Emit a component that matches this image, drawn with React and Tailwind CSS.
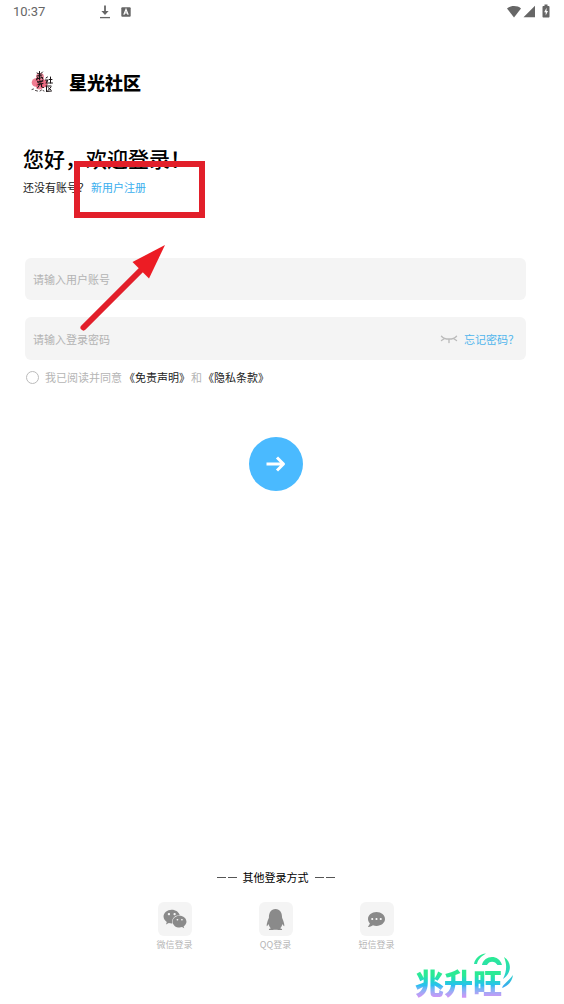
import { useState } from 'react'
import { FaQq, FaWeixin, FaCommentDots } from 'react-icons/fa'

const FONT = 'font-["Noto_Sans_CJK_SC",sans-serif]'

const LOGIN_METHODS = [
  { label: '微信登录', Icon: FaWeixin, size: 24 },
  { label: 'QQ登录', Icon: FaQq, size: 21 },
  { label: '短信登录', Icon: FaCommentDots, size: 17 },
]

/* ── Status bar ── */
function StatusBar() {
  return (
    <header className="flex h-6 items-center pl-[13px] text-[#666]">
      <span className="font-[Roboto,sans-serif] text-[13px] leading-4">10:37</span>
      <svg className="ml-[54px]" width="12" height="14" viewBox="0 0 12 14" fill="none" stroke="currentColor" aria-hidden="true">
        <path d="M6 .5V8" strokeWidth="1.8" />
        <path d="M2.4 6h7.2L6 10z" fill="currentColor" stroke="none" />
        <path d="M1 12.6h10" strokeWidth="1.3" />
      </svg>
      <svg className="ml-2.5" width="10" height="10" viewBox="0 0 10 10" aria-hidden="true">
        <rect x=".3" y=".3" width="9.4" height="9.4" rx="1" fill="currentColor" />
        <path d="M2.8 7.7 5 2.4l2.2 5.3M3.6 6h2.8" fill="none" stroke="#fff" strokeWidth="1.2" />
      </svg>
      <div className="ml-auto flex items-center pb-0.5">
        <svg width="16" height="13" viewBox="0 0 16 13" fill="currentColor" aria-hidden="true">
          <path d="M8 12.4 1 3.4C4.6.2 11.4.2 15 3.4z" />
        </svg>
        <svg className="ml-px" width="13" height="13" viewBox="0 0 13 13" fill="currentColor" aria-hidden="true">
          <path d="M12 .8V12.3H.5z" />
        </svg>
        <svg className="mr-px ml-1.5" width="8" height="14" viewBox="0 0 8 14" aria-hidden="true">
          <path d="M2.5 1.9V.5h3v1.4h1c.6 0 1 .4 1 1v9.6c0 .6-.4 1-1 1h-5c-.6 0-1-.4-1-1V2.9c0-.6.4-1 1-1z" fill="currentColor" />
          <path d="M4.5 3.8 2.2 8.3h1.5v3.2L6 7H4.5z" fill="#fff" />
        </svg>
      </div>
    </header>
  )
}

/* Brush-lettered emblem over pink blossoms */
function Logo() {
  return (
    <svg width="22" height="24" viewBox="0 0 22 24" aria-hidden="true">
      <g fill="#e9526d">
        <circle cx="5" cy="12.5" r="4.3" opacity=".75" />
        <circle cx="9" cy="7" r="4" opacity=".65" />
        <circle cx="12.5" cy="13.5" r="4" opacity=".85" />
        <circle cx="8.5" cy="16" r="3.5" opacity=".7" />
      </g>
      <g fill="none" stroke="#1a1214" strokeWidth="1" strokeLinecap="round">
        <path d="M6 3l3 1.5M11.5 2 9 4.5M6 6l5-1M8.5 1.5v8M5.5 9l6-1.5M7 7l-1.5 3M10 6.5l2 2.5" />
        <path d="M6.5 12l5.5-1M9 10v4M7 14.5l5-1M9 14l-2.500 4M10.5 14v3l2 .5M6.5 11l1 2M11.5 10l-1 2" />
        <path d="M15 8l1.5-1M14.5 10h2.500l-2 3M16 10.5V14M18 9.5h3M19.5 7v6M17.5 13h4" />
        <path d="M15 16h5M15.5 16v5M17 17.5l3 2.5M20 17l-3 3.5M15.5 21.5l5-.5" />
        <path d="M1 19.5l1.5-.5M4.5 20.5l2 .5M9 21l1.5-1M12 20.5l1 .5" strokeWidth=".8" />
      </g>
    </svg>
  )
}

function ClosedEye() {
  return (
    <svg width="18" height="10" viewBox="0 0 18 10" fill="none" stroke="#bbb" strokeWidth="1.4" strokeLinecap="round" aria-hidden="true">
      <path d="M1.5 2.2C4.5 6 13.5 6 16.5 2.2M4.5 4.5 1.5 6.5M9 5.2v3.3M13.5 4.5l3 2" />
    </svg>
  )
}

/* ── Red frame and arrow pointing at the sign-up link ── */
function Callout() {
  return (
    <div className="pointer-events-none absolute top-[161px] left-[74px]" aria-hidden="true">
      <div className="h-[57px] w-[131px] border-6 border-[#e21f2a]" />
      <svg className="mt-[26px] ml-1" width="90" height="88" viewBox="0 0 90 88">
        <path d="M5.5 83.5 62 27" stroke="#e21f2a" strokeWidth="6" strokeLinecap="round" />
        <path d="M87 1 54.5 18 71 34.5z" fill="#ec1c24" />
      </svg>
    </div>
  )
}

function Watermark() {
  return (
    <div className="pointer-events-none absolute right-[50px] bottom-0">
      <svg className="absolute top-0 right-0" width="42" height="38" viewBox="0 0 42 38" fill="none" aria-hidden="true">
        <defs>
          <linearGradient id="arc" x1="0" y1="6" x2="0" y2="36" gradientUnits="userSpaceOnUse">
            <stop offset="0" stopColor="#2bea95" />
            <stop offset=".5" stopColor="#2ad6c4" />
            <stop offset="1" stopColor="#3aa5f5" />
          </linearGradient>
        </defs>
        <path d="M2 12C3 6 8 2 14 1.5 10 4 6 7 5 12zM10 13C12 3 27 2 30 13L25.500 13C23 8.5 17 8.5 15 13z" fill="url(#arc)" />
        <path d="M32 5C40 10 40 21 31 27 35 19 35 12 32 5zM41 23C40 30 36 34 30 36 31 32 37 29 41 23z" fill="url(#arc)" />
      </svg>
      <p className='bg-linear-to-b from-[#2bea95] from-45% via-[#2cbdf3] via-65% to-[#dc8cf7] to-90% bg-clip-text pt-2 pr-3 font-["Noto_Sans_CJK_SC",sans-serif] text-[29px] leading-[44px] font-black text-transparent'>
        兆升旺
      </p>
    </div>
  )
}

export default function App() {
  const [agreed, setAgreed] = useState(false)

  return (
    <div className={`relative flex min-h-screen flex-col bg-white pr-[13px] text-[11px] leading-4 text-[#222] ${FONT}`}>
      <StatusBar />

      <main className="px-[25px]">
        <div className="mt-11 flex items-center gap-4 pl-[6px]">
          <Logo />
          <span className="text-[18px] leading-7 font-black text-black">星光社区</span>
        </div>

        <h1 className="-ml-0.5 mt-12 text-[21px] leading-7 font-medium text-black">您好，欢迎登录！</h1>
        <p className="-ml-0.5 mt-[7px] flex gap-0.5">
          还没有账号？
          <a href="#register" className="text-[#38aeee]">新用户注册</a>
        </p>

        <form onSubmit={(e) => e.preventDefault()}>
          <input
            type="text"
            aria-label="用户账号"
            placeholder="请输入用户账号"
            className="mt-[63px] block h-[42px] w-full rounded-md bg-[#f4f4f4] px-2 placeholder:text-[#b3b3b3] focus:outline-none"
          />

          <div className="mt-[17px] flex h-[43px] items-center rounded-md bg-[#f4f4f4] px-2">
            <input
              type="password"
              aria-label="登录密码"
              placeholder="请输入登录密码"
              className="h-full min-w-0 flex-1 bg-transparent placeholder:text-[#b3b3b3] focus:outline-none"
            />
            <button type="button" aria-label="显示密码">
              <ClosedEye />
            </button>
            <a href="#forgot" className="-mr-px ml-1.5 text-[#4fb4ec]">忘记密码？</a>
          </div>

          <div className="mt-[9px] flex items-center">
            <input
              id="agree"
              type="checkbox"
              checked={agreed}
              onChange={(e) => setAgreed(e.target.checked)}
              className="ml-px size-[13px] appearance-none rounded-full border border-[#bbb] checked:border-[#4abaff] checked:bg-[#4abaff]"
            />
            <label htmlFor="agree" className="ml-1.5 text-[#b5b5b5]">我已阅读并同意</label>
            <a href="#disclaimer" className="ml-0.5">《免责声明》</a>
            <span className="ml-px text-[#b5b5b5]">和</span>
            <a href="#privacy" className="ml-px">《隐私条款》</a>
          </div>

          <button
            type="submit"
            aria-label="登录"
            className="mx-auto mt-[52px] flex size-[54px] items-center justify-center rounded-full bg-[#4abaff]"
          >
            <svg width="20" height="16" viewBox="0 0 20 16" fill="none" stroke="#fff" strokeWidth="3" aria-hidden="true">
              <path d="M.5 8H18M11 1.5 17.5 8 11 14.5" strokeLinejoin="round" />
            </svg>
          </button>
        </form>
      </main>

      {/* ── Other login methods ── */}
      <footer className="mt-auto pb-[51px]">
        <h2 className="flex items-center justify-center gap-1.5 font-normal text-black">
          <span className="flex gap-0.5"><i className="h-px w-[9px] bg-[#555]" /><i className="h-px w-[9px] bg-[#555]" /></span>
          其他登录方式
          <span className="flex gap-0.5"><i className="h-px w-[9px] bg-[#555]" /><i className="h-px w-[9px] bg-[#555]" /></span>
        </h2>
        <div className="mt-[17px] flex justify-center">
          {LOGIN_METHODS.map(({ label, Icon, size }) => (
            <button key={label} type="button" className="flex w-[101px] flex-col items-center text-[9px] text-[#b5b5b5]">
              <span className="flex size-[34px] items-center justify-center rounded-md bg-[#f4f4f4] text-[#8a8a8a]">
                <Icon size={size} />
              </span>
              <span className="mt-px">{label}</span>
            </button>
          ))}
        </div>
      </footer>

      <Callout />
      <Watermark />
    </div>
  )
}
